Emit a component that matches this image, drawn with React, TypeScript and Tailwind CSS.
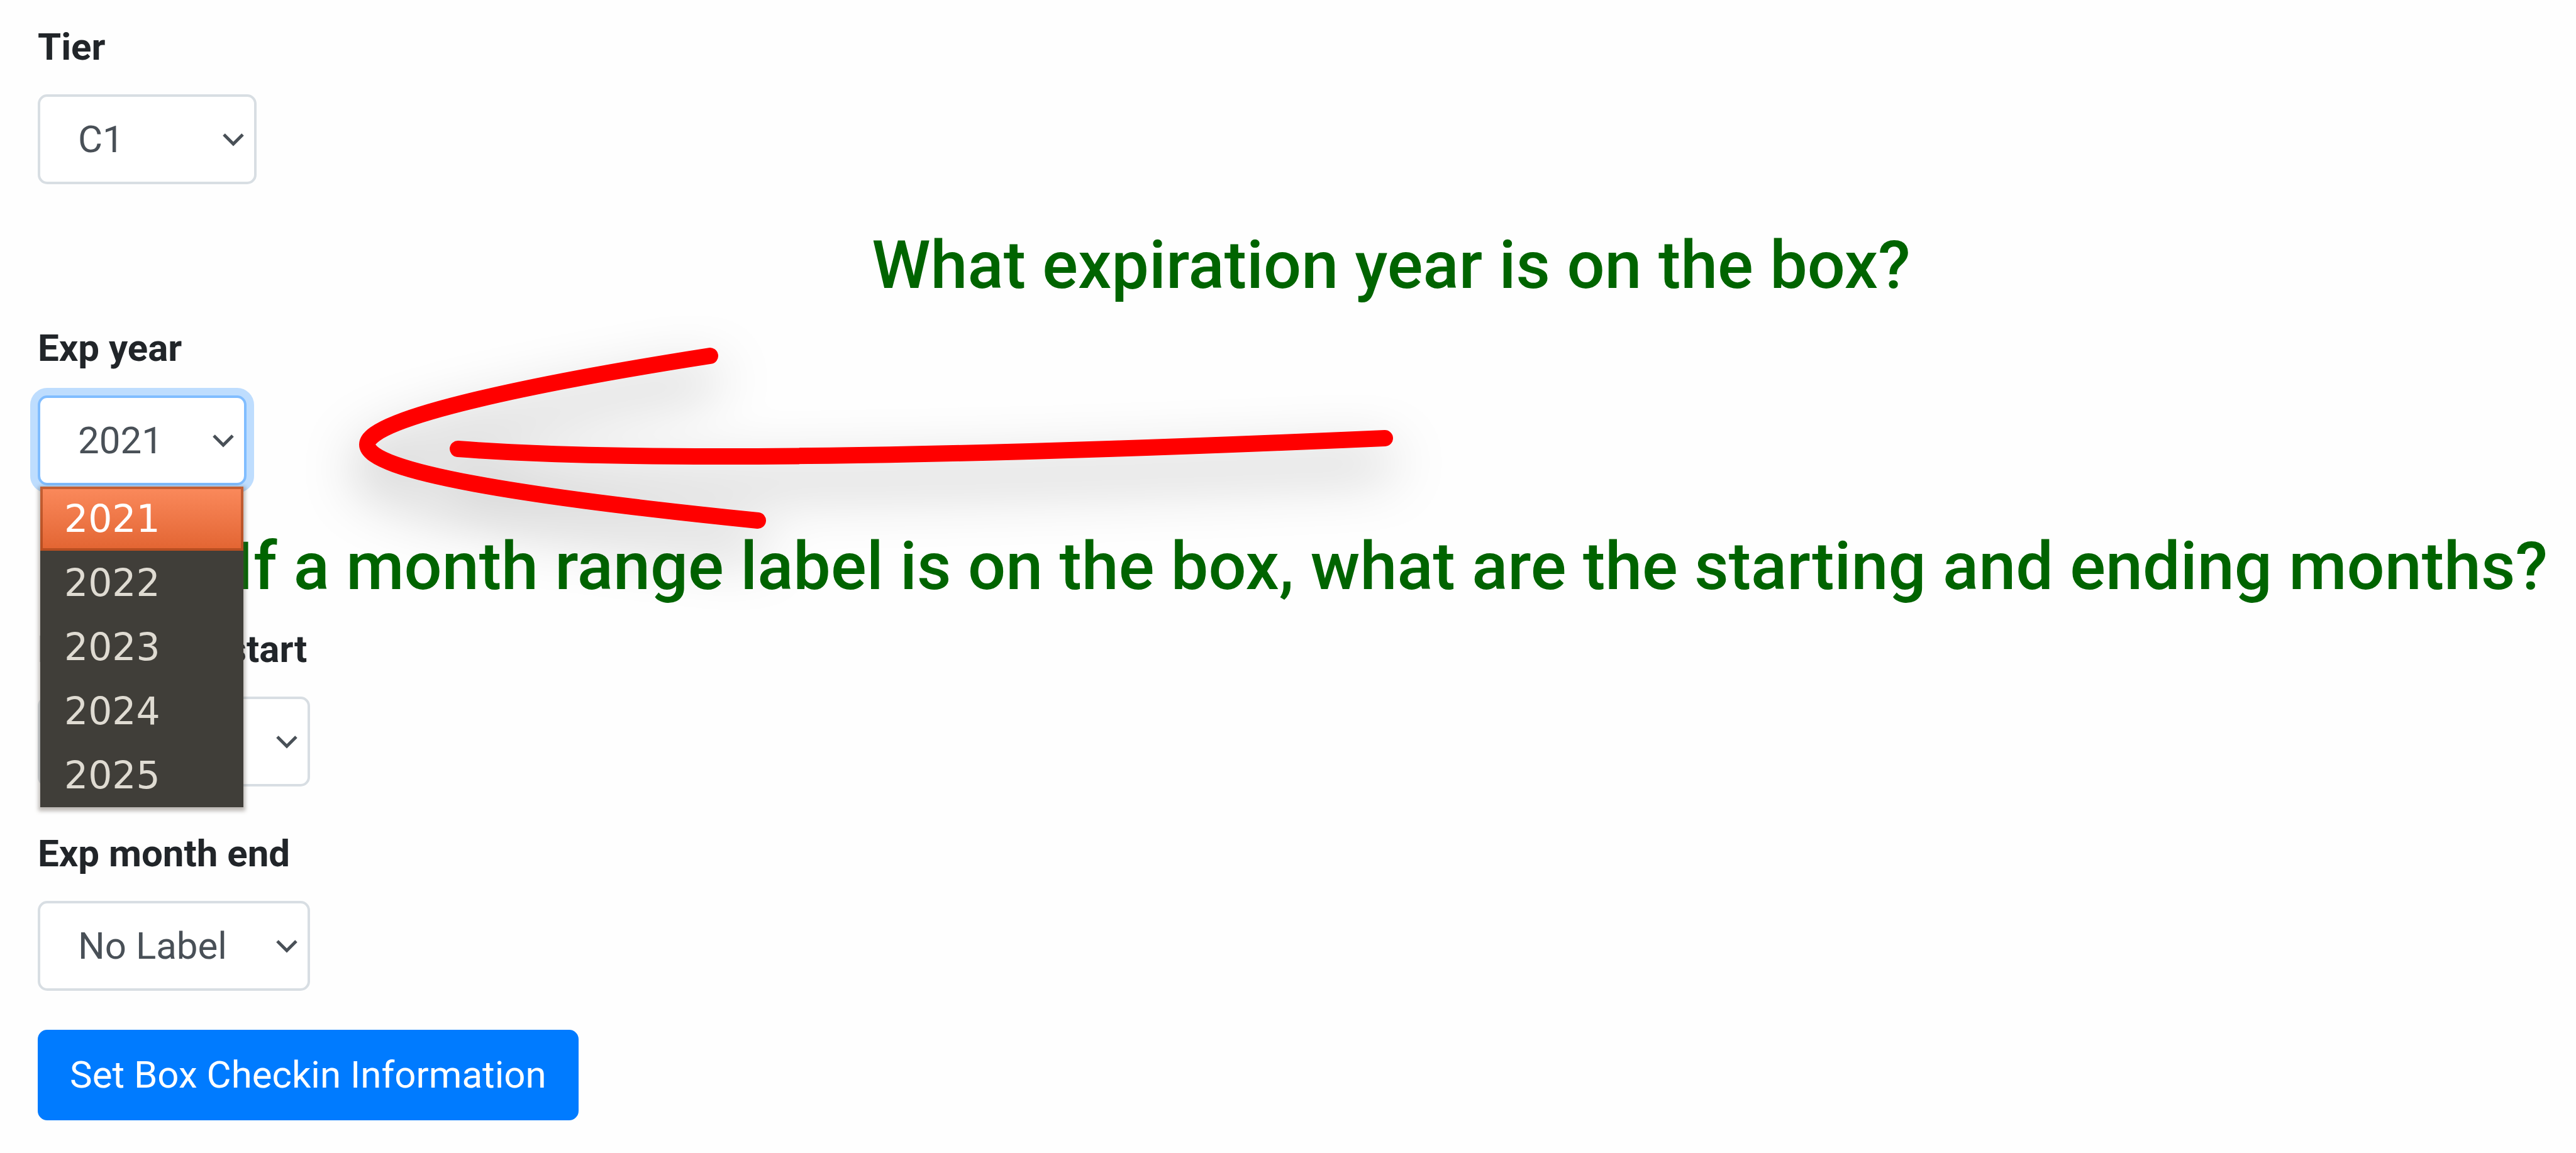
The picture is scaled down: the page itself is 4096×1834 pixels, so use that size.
import type { ReactNode } from "react";

const YEARS = ["2021", "2022", "2023", "2024", "2025"];

function Field({
  id,
  label,
  options,
  width,
  focused = false,
  children,
}: {
  id: string;
  label: string;
  options: string[];
  width: string;
  focused?: boolean;
  children?: ReactNode;
}) {
  return (
    <div className="mb-[62px] flex flex-col items-start">
      <label htmlFor={id} className="mb-[30px] text-[60px] leading-[90px] font-bold whitespace-nowrap">
        {label}
      </label>
      <div className={`relative ${width}`}>
        <select
          id={id}
          className={`block h-[143px] w-full appearance-none rounded-[15px] border-4 bg-white pr-[60px] pl-[60px] text-[60px] leading-[90px] text-[#495057] outline-none ${
            focused
              ? "border-[#80bdff] shadow-[0_0_0_12px_rgba(0,123,255,0.25)]"
              : "border-[#d8dee3]"
          }`}
        >
          {options.map((o) => (
            <option key={o}>{o}</option>
          ))}
        </select>
        <svg
          className="pointer-events-none absolute top-[60px] right-[18px] h-[26px] w-[38px]"
          viewBox="0 0 38 26"
          fill="none"
          stroke="#495057"
          strokeWidth="5"
          aria-hidden="true"
        >
          <path d="M4 4 L19 19 L34 4" />
        </svg>
        {children}
      </div>
    </div>
  );
}

function YearMenu() {
  return (
    <ul
      role="listbox"
      aria-label="Exp year"
      className="absolute top-[145px] left-[4px] z-10 w-[323px] bg-[#403e39] font-['DejaVu_Sans',sans-serif] text-[60px] leading-[102px] text-[#dfdbd2] shadow-[0_3px_6px_3px_rgba(90,80,70,0.4)]"
    >
      {YEARS.map((y, i) => (
        <li
          key={y}
          role="option"
          aria-selected={i === 0}
          className={
            i === 0
              ? "h-[102px] bg-linear-to-b from-[#fb8a5c] to-[#e26431] pl-[38px] text-white shadow-[inset_0_0_0_4px_rgba(150,60,20,0.55)]"
              : "h-[102px] pl-[38px]"
          }
        >
          {y}
        </li>
      ))}
    </ul>
  );
}

function Question({ children }: { children: ReactNode }) {
  return (
    <h3 className="mt-[66px] mb-[23px] pl-[268px] text-center text-[106px] leading-[127px] font-medium whitespace-nowrap text-[#006400]">
      {children}
    </h3>
  );
}

function Arrow() {
  return (
    <svg
      className="pointer-events-none absolute top-[400px] left-[400px] z-20 h-[660px] w-[2000px] overflow-visible"
      viewBox="400 400 2000 660"
      fill="none"
      stroke="#ff0000"
      strokeWidth="26"
      strokeLinecap="round"
      aria-hidden="true"
    >
      <defs>
        <filter id="arrow-shadow" filterUnits="userSpaceOnUse" x="400" y="400" width="2000" height="660">
          <feDropShadow dx="0" dy="38" stdDeviation="44" floodColor="#000" floodOpacity="0.32" />
        </filter>
      </defs>
      <g filter="url(#arrow-shadow)">
        <path d="M1129 566 C860 608 584 664 584 707 C584 750 830 790 1205 828" />
        <path d="M728 714 C1000 735 1500 728 2202 697" />
      </g>
    </svg>
  );
}

export default function App() {
  return (
    <main className="relative min-h-screen overflow-hidden bg-[#fefefe] pt-[30px] pl-[60px] font-[Roboto,sans-serif] text-[#212529]">
      <form onSubmit={(e) => e.preventDefault()}>
        <Field id="tier" label="Tier" options={["C1"]} width="w-[348px]" />
        <Question>What expiration year is on the box?</Question>
        <Field id="year" label="Exp year" options={YEARS} width="w-[332px]" focused>
          <YearMenu />
        </Field>
        <Question>If a month range label is on the box, what are the starting and ending months?</Question>
        <Field id="month-start" label="Exp month start" options={["No Label"]} width="w-[433px]" />
        <Field id="month-end" label="Exp month end" options={["No Label"]} width="w-[433px]" />
        <button
          type="submit"
          className="h-[144px] rounded-[15px] bg-[#007bff] px-[51px] text-[60px] leading-[90px] whitespace-nowrap text-white"
        >
          Set Box Checkin Information
        </button>
      </form>
      <Arrow />
    </main>
  );
}
